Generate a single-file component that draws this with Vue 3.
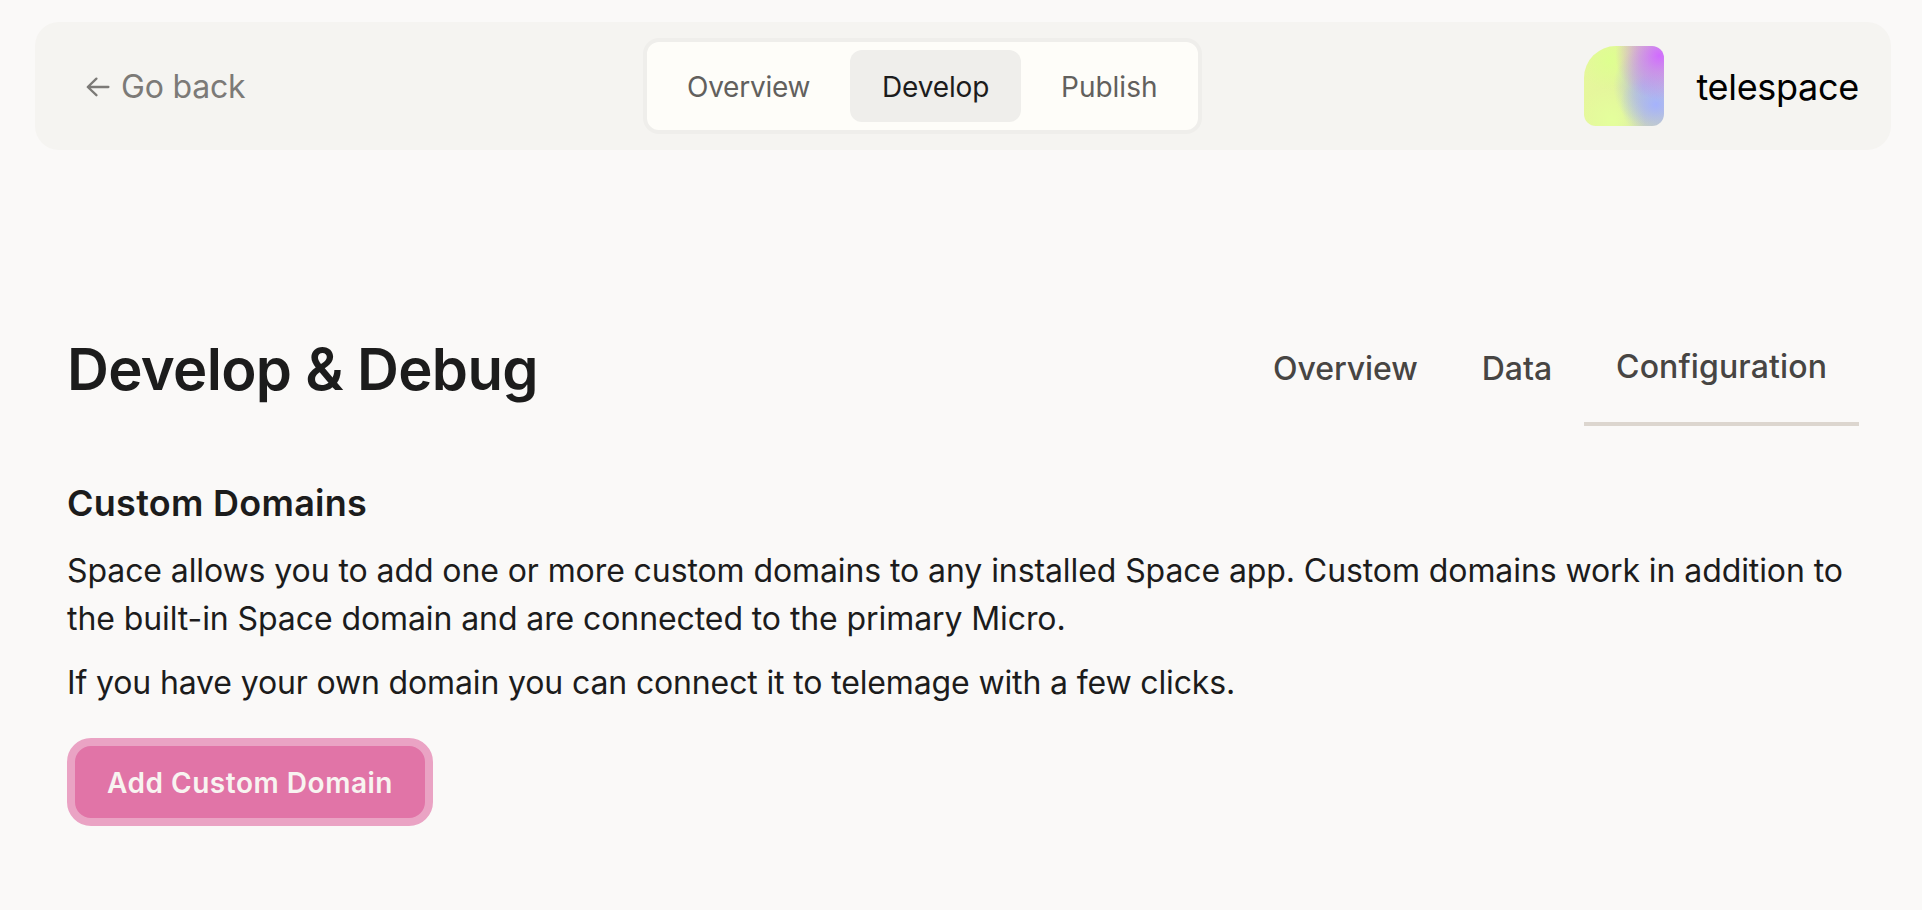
<script setup>
const modes = ['Overview', 'Develop', 'Publish']
const sections = ['Overview', 'Data', 'Configuration']
</script>

<template>
  <div class="page">
    <header class="topbar">
      <a class="back">
        <svg class="arrow" viewBox="0 0 24 20" fill="none" stroke="currentColor" stroke-width="2.3" stroke-linecap="round" stroke-linejoin="round">
          <path d="M10.4 1.6 1.8 10 10.4 18.2M2 10H22.4" />
        </svg>
        <span>Go back</span>
      </a>
      <nav class="modes">
        <a v-for="m in modes" :key="m" class="mode" :class="{ active: m === 'Develop' }">{{ m }}</a>
      </nav>
      <div class="app">
        <div class="app-icon"></div>
        <span class="app-name">telespace</span>
      </div>
    </header>
    <main class="content">
      <div class="head">
        <h1>Develop &amp; Debug</h1>
        <nav class="sections">
          <a v-for="s in sections" :key="s" class="section" :class="{ current: s === 'Configuration' }">{{ s }}</a>
        </nav>
      </div>
      <h2>Custom Domains</h2>
      <p class="lead">Space allows you to add one or more custom domains to any installed Space app. Custom domains work in addition to the built-in Space domain and are connected to the primary Micro.</p>
      <p>If you have your own domain you can connect it to telemage with a few clicks.</p>
      <button class="add">Add Custom Domain</button>
    </main>
  </div>
</template>

<style>
html, body { margin: 0; background: #faf9f8; }
</style>

<style scoped>
.page {
  box-sizing: border-box;
  height: 910px;
  padding: 22px 31px 0 35px;
  overflow: hidden;
  background: #faf9f8;
  color: #1c1c1c;
  font-family: Inter, "Liberation Sans", sans-serif;
}
.topbar {
  box-sizing: border-box;
  display: grid;
  grid-template-columns: 557px 559px 1fr;
  align-items: center;
  height: 128px;
  padding: 0 32px 0 51px;
  border-radius: 24px;
  background: #f5f4f1;
}
.back { display: flex; align-items: center; gap: 11px; color: #7c7a77; font-size: 32px; line-height: 48px; letter-spacing: -0.2px; }
.back span { padding-top: 2px; }
.arrow { width: 24px; height: 20px; padding-top: 1px; }
.modes {
  box-sizing: border-box;
  display: grid;
  grid-template-columns: 187px 171px 1fr;
  gap: 8px;
  height: 96px;
  padding: 8px;
  border: 4px solid #efeeeb;
  border-radius: 16px;
  background: #fefdf9;
}
.mode { height: 72px; padding-left: 32px; border-radius: 12px; font-size: 28px; line-height: 74px; color: #62605d; letter-spacing: -0.15px; }
.mode:first-child { letter-spacing: -0.25px; }
.mode:last-child { letter-spacing: 0; }
.mode.active { background: #efeeeb; color: #1c1c1c; }
.app { display: flex; align-items: center; justify-content: flex-end; gap: 32px; }
.app-icon {
  width: 80px;
  height: 80px;
  border-radius: 32px 12px 12px 12px;
  background:
    radial-gradient(circle 44px at 94% 12%, #d16bff 0%, rgba(209, 107, 255, 0.62) 34%, rgba(209, 107, 255, 0) 100%),
    radial-gradient(ellipse 36px 32px at 90% 73%, #a5b2fc 0%, rgba(165, 178, 252, 0.6) 38%, rgba(165, 178, 252, 0) 100%),
    radial-gradient(ellipse 30px 38px at 74% 50%, rgba(165, 178, 235, 0.65) 0%, rgba(165, 178, 235, 0) 100%),
    radial-gradient(circle 30px at 32% 18%, #deff90 0%, rgba(222, 255, 144, 0) 100%),
    radial-gradient(circle 34px at 35% 92%, #e4ff9c 0%, rgba(228, 255, 156, 0) 100%),
    linear-gradient(90deg, #e6f79c 0%, #e4f59c 40%, #d0d8b4 75%, #c6d0c4 100%);
}
.app-name { padding-top: 2px; font-size: 36px; line-height: 48px; letter-spacing: -0.3px; color: #000; }
.content { padding: 178px 32px 0 32px; }
.head { display: flex; justify-content: space-between; height: 98px; }
h1 { margin: 0; font-size: 58px; font-weight: 600; line-height: 82px; letter-spacing: -0.67px; }
.sections { display: flex; align-items: stretch; }
.section { box-sizing: border-box; padding: 0 32px; font-size: 32px; font-weight: 500; line-height: 82px; color: #474543; letter-spacing: -0.05px; }
.section.current { border-bottom: 4px solid #dcd6cf; line-height: 78px; letter-spacing: 0.12px; }
h2 { margin: 53px 0 0; font-size: 36px; font-weight: 600; line-height: 48px; letter-spacing: 0.27px; }
p { margin: 0 0 16px; font-size: 32px; line-height: 48px; letter-spacing: -0.14px; }
.lead { margin-top: 20px; letter-spacing: -0.09px; }
.add {
  box-sizing: border-box;
  display: block;
  width: 366px;
  height: 88px;
  margin-top: 31px;
  padding: 2px 0 0;
  border: 8px solid #eaa3c4;
  border-radius: 24px;
  background: #e174a7;
  color: #f8f4f1;
  font: 600 28px/70px Inter, "Liberation Sans", sans-serif;
  letter-spacing: 0.53px;
}
</style>
